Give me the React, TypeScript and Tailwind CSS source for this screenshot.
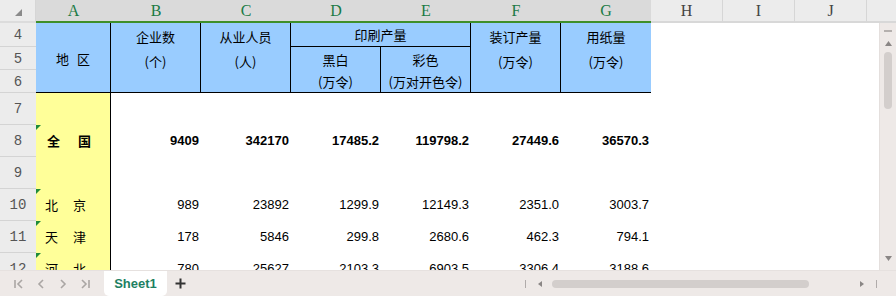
import React from "react";

const CJK = { fontFamily: '"Noto Sans CJK SC", "Noto Sans", sans-serif' };
const NUM = { fontFamily: '"Liberation Sans", Arial, sans-serif' };
const MONO = { fontFamily: '"Liberation Mono", "Courier New", monospace' };
const LET = { fontFamily: '"Liberation Serif", "Times New Roman", serif' };

type Row = { name: [string, string]; vals: string[]; bold?: boolean };

const Tri = () => (
  <svg className="absolute left-0 top-0" width="5" height="5" viewBox="0 0 5 5">
    <path d="M0 0H5L0 5Z" fill="#1f8a3a" />
  </svg>
);

function ColHeader() {
  const cols: [string, number, boolean][] = [
    ["A", 75, true],
    ["B", 90, true],
    ["C", 90, true],
    ["D", 90, true],
    ["E", 90, true],
    ["F", 90, true],
    ["G", 90, true],
    ["H", 72, false],
    ["I", 72, false],
    ["J", 72, false],
  ];
  return (
    <div className="flex h-[23px] shrink-0">
      <div className="w-[36px] h-full bg-[#ececec] border-r border-[#d6d6d6] border-b-2 border-b-[#dcdcdc] relative">
        <svg className="absolute left-[15px] top-[9px]" width="7" height="7" viewBox="0 0 7 7">
          <path d="M7 0V7H0Z" fill="#8a8a8a" />
        </svg>
      </div>
      {cols.map(([l, w, sel]) => (
        <div
          key={l}
          style={{ width: w, ...LET }}
          className={
            sel
              ? "h-full bg-[#dadada] border-b-2 border-[#3f8f2a] flex items-center justify-center text-[16px] text-[#1b7a45]"
              : "h-full bg-[#ececec] border-b-2 border-[#d8d8d8] border-r border-r-[#d6d6d6] flex items-center justify-center text-[16px] text-[#444]"
          }
        >
          {l}
        </div>
      ))}
      <div className="flex-1 h-full bg-[#ececec] border-b-2 border-[#d8d8d8]" />
    </div>
  );
}

const rows: Row[] = [
  { name: ["全", "国"], vals: ["9409", "342170", "17485.2", "119798.2", "27449.6", "36570.3"], bold: true },
  { name: ["北", "京"], vals: ["989", "23892", "1299.9", "12149.3", "2351.0", "3003.7"] },
  { name: ["天", "津"], vals: ["178", "5846", "299.8", "2680.6", "462.3", "794.1"] },
  { name: ["河", "北"], vals: ["780", "25627", "2103.3", "6903.5", "3306.4", "3188.6"] },
];

function RowNum({ n, row }: { n: number; row: string }) {
  return (
    <div
      className={`col-start-1 ${row} bg-[#ececec] border-b border-[#d4d4d4] flex items-center justify-center text-[14px] text-[#555] pt-[2px]`}
      style={MONO}
    >
      {n}
    </div>
  );
}

function Body() {
  const blue = "bg-[#99ccff]";
  return (
    <div className="flex-1 overflow-hidden bg-white">
      <div className="grid grid-cols-[36px_75px_90px_90px_90px_90px_90px_90px_72px_72px_72px_1fr] grid-rows-[24px_23px_23px_32px_32px_32px_32px_32px_32px] text-[13px] text-black">
        <RowNum n={4} row="row-start-1" />
        <RowNum n={5} row="row-start-2" />
        <RowNum n={6} row="row-start-3" />
        <RowNum n={7} row="row-start-4" />
        <RowNum n={8} row="row-start-5" />
        <RowNum n={9} row="row-start-6" />
        <RowNum n={10} row="row-start-7" />
        <RowNum n={11} row="row-start-8" />
        <RowNum n={12} row="row-start-9" />

        <div className={`col-start-2 row-start-1 row-span-3 ${blue} border-r border-b border-black flex items-center justify-center pt-[3px]`} style={CJK}>
          <span>地</span>
          <span className="ml-[8px]">区</span>
        </div>
        <div className={`col-start-3 row-start-1 row-span-3 ${blue} border-r border-b border-black flex flex-col items-center pt-[1px] leading-[25px]`} style={CJK}>
          <span>企业数</span>
          <span>(个)</span>
        </div>
        <div className={`col-start-4 row-start-1 row-span-3 ${blue} border-r border-b border-black flex flex-col items-center pt-[1px] leading-[25px]`} style={CJK}>
          <span>从业人员</span>
          <span>(人)</span>
        </div>
        <div className={`col-start-5 col-span-2 row-start-1 ${blue} border-r border-b border-black flex items-center justify-center pt-[1px]`} style={CJK}>
          印刷产量
        </div>
        <div className={`col-start-5 row-start-2 row-span-2 ${blue} border-r border-b border-black flex flex-col items-center pt-[2px] leading-[22px]`} style={CJK}>
          <span>黑白</span>
          <span>(万令)</span>
        </div>
        <div className={`col-start-6 row-start-2 row-span-2 ${blue} border-r border-b border-black flex flex-col items-center pt-[2px] leading-[22px]`} style={CJK}>
          <span>彩色</span>
          <span>(万对开色令)</span>
        </div>
        <div className={`col-start-7 row-start-1 row-span-3 ${blue} border-r border-b border-black flex flex-col items-center pt-[1px] leading-[25px]`} style={CJK}>
          <span>装订产量</span>
          <span>(万令)</span>
        </div>
        <div className={`col-start-8 row-start-1 row-span-3 ${blue} border-b border-black flex flex-col items-center pt-[1px] leading-[25px]`} style={CJK}>
          <span>用纸量</span>
          <span>(万令)</span>
        </div>

        <div className="col-start-2 row-start-4 bg-[#ffff99] border-r border-black" />
        <div className="col-start-2 row-start-6 bg-[#ffff99] border-r border-black" />

        {rows.map((r, i) => {
          const rowCls = ["row-start-5", "row-start-7", "row-start-8", "row-start-9"][i];
          const colCls = ["col-start-3", "col-start-4", "col-start-5", "col-start-6", "col-start-7", "col-start-8"];
          return (
            <React.Fragment key={i}>
              <div
                className={`col-start-2 ${rowCls} bg-[#ffff99] border-r border-black relative flex items-center ${
                  r.bold ? "pl-[11px] gap-[18px] font-bold" : "pl-[9px] gap-[15px]"
                }`}
                style={CJK}
              >
                <Tri />
                <span>{r.name[0]}</span>
                <span>{r.name[1]}</span>
              </div>
              {r.vals.map((v, j) => (
                <div
                  key={j}
                  className={`${colCls[j]} ${rowCls} flex items-center justify-end pr-[2px] ${r.bold ? "font-bold" : ""}`}
                  style={NUM}
                >
                  {v}
                </div>
              ))}
            </React.Fragment>
          );
        })}
      </div>
    </div>
  );
}

function VScroll() {
  return (
    <div className="w-[17px] shrink-0 bg-[#eee9e7] border-l border-[#e4dfdd] flex flex-col items-center">
      <div className="mt-[7px] w-[8px] h-[2px] bg-[#b5b0ae]" />
      <svg className="mt-[9px]" width="7" height="5" viewBox="0 0 7 5">
        <path d="M3.5 0L7 5H0Z" fill="#8a8685" />
      </svg>
      <div className="mt-[6px] w-[8px] h-[57px] rounded-full bg-[#d3cecc]" />
      <div className="flex-1" />
      <svg className="mb-[9px]" width="7" height="5" viewBox="0 0 7 5">
        <path d="M0 0H7L3.5 5Z" fill="#8a8685" />
      </svg>
    </div>
  );
}

function NavIcon({ d }: { d: string }) {
  return (
    <svg width="12" height="12" viewBox="0 0 12 12" fill="none" stroke="#aaa6a4" strokeWidth="1.6">
      <path d={d} />
    </svg>
  );
}

function BottomBar() {
  return (
    <div className="h-[26px] shrink-0 bg-[#eee9e7] border-t border-[#e6e1df] flex items-start">
      <div className="flex items-center h-[25px] pl-[13px] gap-[10px]">
        <NavIcon d="M2 2V10M9 2L5 6L9 10" />
        <NavIcon d="M8 2L4 6L8 10" />
        <NavIcon d="M4 2L8 6L4 10" />
        <NavIcon d="M3 2L7 6L3 10M10 2V10" />
      </div>
      <div
        className="ml-[13px] w-[63px] h-[25px] bg-white rounded-b-[5px] flex items-center justify-center font-bold text-[13px] text-[#1d7f62]"
        style={NUM}
      >
        Sheet1
      </div>
      <div className="ml-[8px] h-[25px] flex items-center">
        <svg width="11" height="11" viewBox="0 0 11 11" stroke="#333" strokeWidth="2">
          <path d="M5.5 0.5V10.5M0.5 5.5H10.5" />
        </svg>
      </div>
      <div className="flex-1" />
      <div className="h-[25px] flex items-center">
        <div className="w-px h-[8px] bg-[#b0abaa]" />
        <svg className="ml-[12px]" width="4" height="6" viewBox="0 0 4 6">
          <path d="M4 0V6L0 3Z" fill="#8a8685" />
        </svg>
        <div className="ml-[10px] w-[257px] h-[8px] rounded-full bg-[#d3cecc]" />
        <svg className="ml-[51px]" width="4" height="6" viewBox="0 0 4 6">
          <path d="M0 0V6L4 3Z" fill="#8a8685" />
        </svg>
        <div className="ml-[12px] w-px h-[8px] bg-[#b0abaa]" />
        <div className="w-[19px]" />
      </div>
    </div>
  );
}

export default function App() {
  return (
    <div className="w-[896px] h-[296px] flex flex-col overflow-hidden bg-white">
      <ColHeader />
      <div className="flex flex-1 min-h-0">
        <Body />
        <VScroll />
      </div>
      <BottomBar />
    </div>
  );
}
